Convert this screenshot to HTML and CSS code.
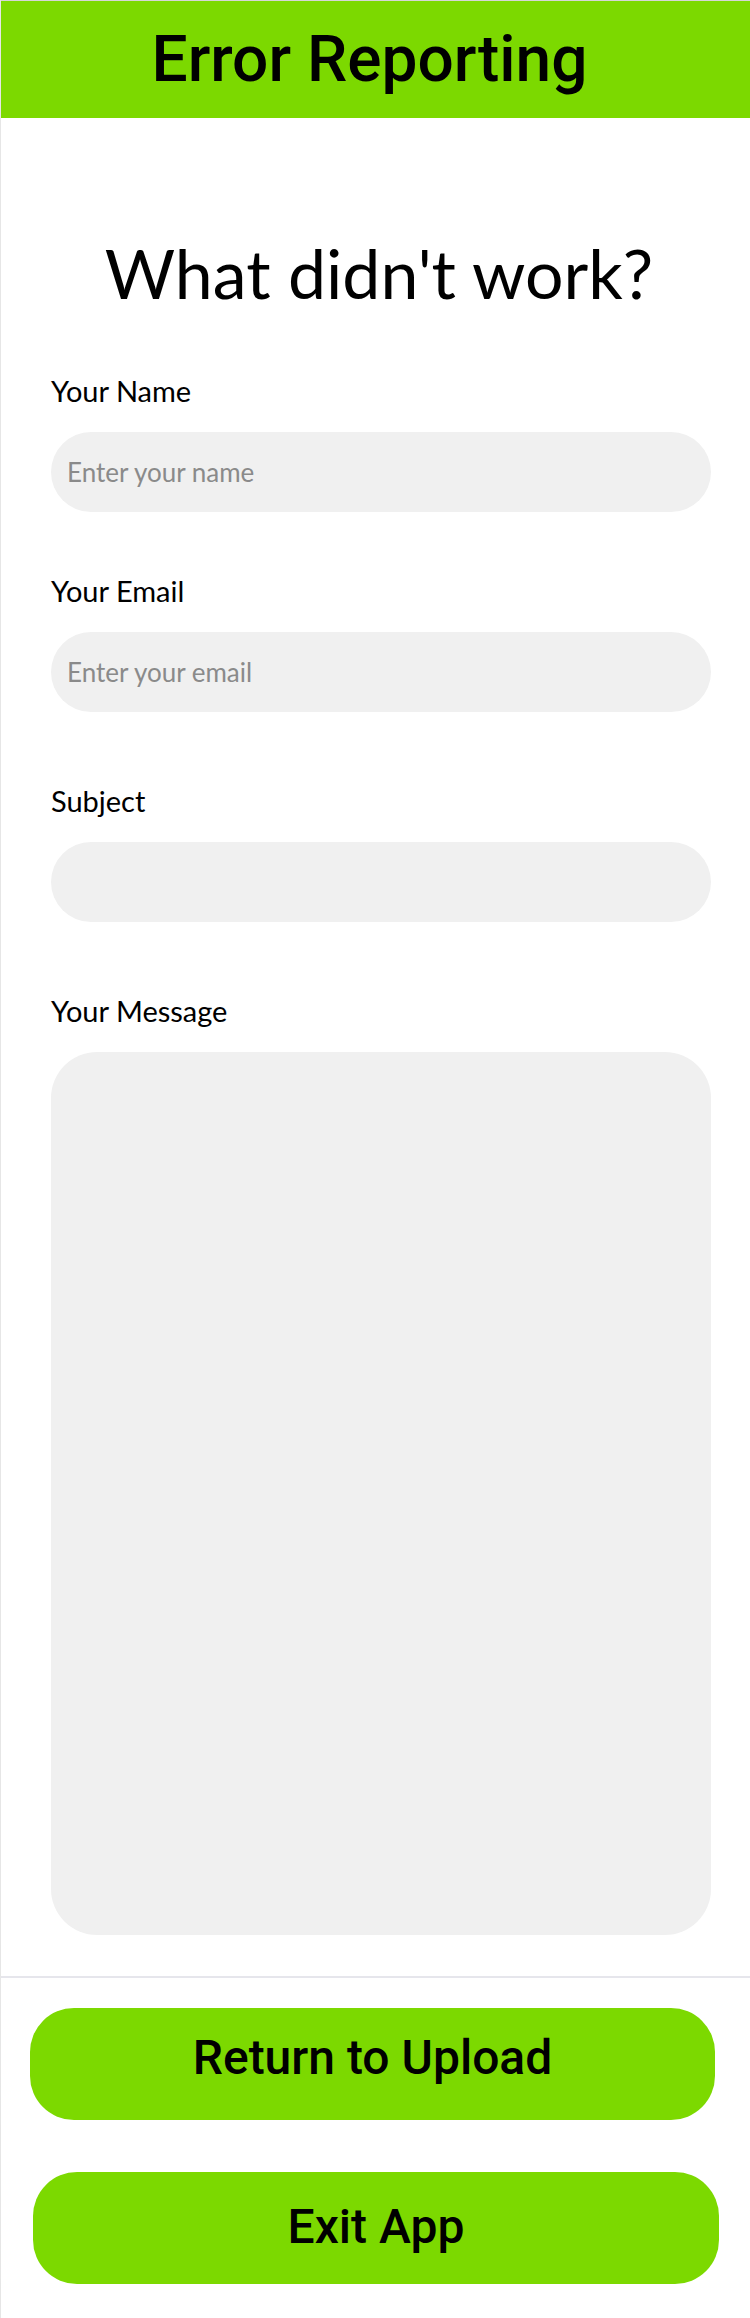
FILE: index.html
```html
<!DOCTYPE html>
<html lang="en">
<head>
<meta charset="utf-8">
<title>Error Reporting</title>
<link rel="stylesheet" href="styles.css">
</head>
<body>
<div class="page">
  <header class="topbar"><h1 class="topbar-title">Error Reporting</h1></header>
  <main class="form">
    <h2 class="form-title">What didn't work?</h2>
    <div class="field">
      <label class="field-label">Your Name</label>
      <input class="field-input" type="text" placeholder="Enter your name">
    </div>
    <div class="field field-email">
      <label class="field-label">Your Email</label>
      <input class="field-input" type="email" placeholder="Enter your email">
    </div>
    <div class="field field-spaced">
      <label class="field-label">Subject</label>
      <input class="field-input" type="text">
    </div>
    <div class="field field-spaced">
      <label class="field-label">Your Message</label>
      <textarea class="field-textarea"></textarea>
    </div>
  </main>
  <div class="divider"></div>
  <div class="actions">
    <button class="action-btn action-return">Return to Upload</button>
    <button class="action-btn action-exit">Exit App</button>
  </div>
</div>
</body>
</html>
```
FILE: styles.css
```css
* { box-sizing: border-box; }
html, body { margin: 0; padding: 0; background: #fff; }
body { width: 750px; height: 2318px; overflow: hidden; font-family: "Lato", "Noto Sans", sans-serif; color: #000; }
.page { border-left: 1px solid #e6e6e6; min-height: 2318px; }
.topbar {
  height: 118px;
  background: #7cd900;
  border-top: 1px solid #d6d6d6;
  display: flex;
  align-items: center;
  justify-content: center;
  padding-right: 12px;
}
.topbar-title {
  margin: 0;
  font-family: "Roboto", sans-serif;
  font-weight: 500;
  font-size: 64px;
  line-height: normal;
}
.form { padding: 0 39px 0 50px; }
.form-title {
  margin: 121px 0 0;
  font-weight: 400;
  font-size: 68px;
  line-height: 68px;
  text-align: center;
  padding-right: 4px;
}
.field { display: flex; flex-direction: column; gap: 27px; }
.form-title + .field { margin-top: 69px; }
.field-email { margin-top: 64px; }
.field-spaced { margin-top: 74px; }
.field-label { font-size: 29px; line-height: 29px; }
.field-input {
  height: 80px;
  border: none;
  border-radius: 40px;
  background: #f0f0f0;
  padding: 0 16px;
  font-family: "Lato", sans-serif;
  font-size: 26px;
  color: #000;
  outline: none;
}
.field-input::placeholder { color: #8a8a8a; }
.field-textarea {
  height: 883px;
  border: none;
  border-radius: 46px;
  background: #f0f0f0;
  resize: none;
  outline: none;
  font-family: "Lato", sans-serif;
}
.divider { margin-top: 41px; height: 2px; background: #e6e6ec; }
.actions { display: flex; flex-direction: column; gap: 52px; padding-top: 30px; }
.action-btn {
  height: 112px;
  border: none;
  border-radius: 44px;
  background: #7cd900;
  font-family: "Roboto", sans-serif;
  font-weight: 500;
  font-size: 48px;
  color: #000;
  padding: 0;
}
.action-return { margin-left: 29px; width: 685px; padding-bottom: 13px; }
.action-exit { margin-left: 32px; width: 686px; padding-bottom: 3px; }
```
